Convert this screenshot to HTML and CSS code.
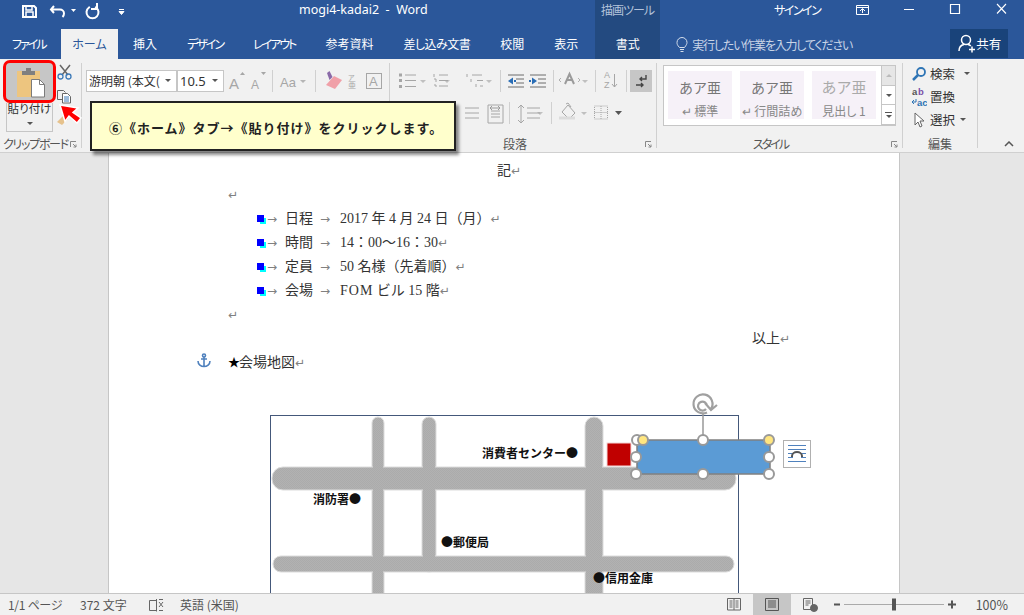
FILE: index.html
```html
<!DOCTYPE html>
<html lang="ja">
<head>
  <meta charset="UTF-8" />
  <title>mogi4-kadai2 - Word</title>
  <link rel="stylesheet" href="styles.css">
</head>
<body>
<div class="app">
  <div class="titlebar">
    <svg class="qat" width="299" height="29" viewBox="0 0 299 29" fill="none" stroke="#fff" stroke-width="2">
      <path d="M23 6h11l2 2v9H23z"/><path d="M26 6v4h6V6M26 17v-5h7v5" stroke-width="1.5"/>
      <path d="M54 6l-3 3.500 3 3.500M52 9.500h8a4 4 0 0 1 4 4c0 1.500-.5 2.500-1.500 3.500"/>
      <path d="M71 9h5l-2.500 3z" fill="#fff" stroke="none"/>
      <path d="M89 7.500a6 6 0 1 0 7 0M97 4v5h-5" stroke-linecap="square"/>
      <path d="M119 9.500h5M119 11.500h5l-2.500 3z" fill="#fff" stroke-width="1"/>
    </svg>
    <div class="doc-title">mogi4-kadai2&nbsp; -&nbsp; Word</div>
    <div class="context-label">描画ツール</div>
    <div class="signin">サインイン</div>
    <svg class="winbtns" width="204" height="29" viewBox="820 0 204 29" fill="none" stroke="#fff">
      <path d="M856.500 5.500h12v9h-12zM856.500 7.500h12M862.500 13V9M860 11l2.500-2.500L865 11"/>
      <path d="M904 9.500h10"/>
      <path d="M950.500 4.500h9v9h-9z" stroke-width="1.200"/>
      <path d="M997 4l9 9.500M1006 4l-9 9.500" stroke-width="1.100"/>
    </svg>
  </div>

  <div class="tabs">
    <div class="tab tab-file kana">ファイル</div>
    <div class="tab tab-active">ホーム</div>
    <div class="tab">挿入</div>
    <div class="tab kana">デザイン</div>
    <div class="tab kana">レイアウト</div>
    <div class="tab">参考資料</div>
    <div class="tab tab-long">差し込み文書</div>
    <div class="tab">校閲</div>
    <div class="tab">表示</div>
    <div class="tab tab-context">書式</div>
    <div class="tellme">
      <svg width="12" height="15" viewBox="0 0 12 15" fill="none" stroke="#d5deeb"><path d="M3.500 10.500C1 8 1 6.500 1 5.500a5 5 0 0 1 10 0c0 1-.5 2.500-2.500 5zM4 12.500h4M4.500 14.500h3"/></svg>
      <span>実行したい作業を入力してください</span>
    </div>
    <div class="share">
      <svg width="18" height="19" viewBox="0 0 18 19" fill="none" stroke="#fff" stroke-width="1.500"><circle cx="8" cy="6" r="4.500"/><path d="M1 17c0-4 2.500-6 5-6.500M10 10.500c1 .2 2 .7 2.800 1.500M11 15.500h6M14 12.500v6"/></svg>
      <span>共有</span>
    </div>
  </div>

  <div class="ribbon">
    <div class="group group-clip">
      <div class="paste-top">
        <svg width="30" height="32" viewBox="17 68 30 32">
          <rect x="17" y="71" width="23" height="26" fill="#edc57f"/>
          <path d="M22 71h13v4H22zM26 68h5v4h-5z" fill="#7f7f7f"/>
          <path d="M31.500 79.500h8l5 5v12.500h-13z" fill="#fff" stroke="#7b7b7b"/>
          <path d="M39.500 79.500v5h5" fill="none" stroke="#7b7b7b"/>
        </svg>
      </div>
      <div class="paste-label">貼り付け<i class="caret"></i></div>
      <svg class="clip-tools" width="20" height="66" viewBox="55 62 20 66" fill="none">
        <path d="M60 65l8 10M70 65l-8 10" stroke="#666" stroke-width="1.500"/>
        <circle cx="60.500" cy="76.500" r="2.500" stroke="#3d7ab8" stroke-width="1.300"/><circle cx="68.500" cy="76.500" r="2.500" stroke="#3d7ab8" stroke-width="1.300"/>
        <path d="M57.500 90.500h6l2 2M57.500 90.500v9h5" stroke="#666"/>
        <path d="M62.500 93.500h5l3 3v6.500h-8z" fill="#fff" stroke="#666"/>
        <path d="M64 97h5M64 99h5M64 101h5" stroke="#3d7ab8"/>
        <path d="M57 122l7-7 4 4-6 6z" fill="#e6c28d"/>
      </svg>
      <svg class="red-arrow" width="28" height="24" viewBox="56 102 28 24">
        <path d="M60 105l18 3-5 4.500 8 5.500-4 5-8-7-4 5.500z" fill="#f00" stroke="#fff" stroke-width="1.500"/>
      </svg>
      <div class="group-label clip-label">クリップボード</div>
      <svg class="launcher" width="7" height="7" viewBox="0 0 7 7" fill="none" stroke="#888"><path d="M.5 6V.5H6M3 3l3 3M6 3.500V6H3.500"/></svg>
    </div>

    <div class="group group-font">
      <div class="font-row">
        <div class="combo combo-name"><span class="combo-text">游明朝 (本文(</span><i class="caret caret-in"></i></div>
        <div class="combo combo-size"><span class="combo-text">10.5</span><i class="caret caret-in"></i></div>
        <svg class="font-tools" width="165" height="24" viewBox="224 68 165 24" fill="none">
          <text x="229" y="89" class="glyph" font-size="15">A</text><path d="M240 75l2.500-3 2.500 3z" fill="#a6a6a6"/>
          <text x="251" y="89" class="glyph" font-size="12">A</text><path d="M261 72l2.500 3 2.500-3z" fill="#a6a6a6"/>
          <path d="M272.500 70v22" stroke="#d0d0d0"/>
          <text x="280" y="87" class="glyph" font-size="13">Aa</text><path d="M300 80h6l-3 3z" fill="#b5b5b5"/>
          <path d="M315.500 70v22" stroke="#d0d0d0"/>
          <path d="M326 85l8-9 8 4-7 9z" fill="#f0a0a8"/><path d="M327 73l2.500-2 3 6-3 3z" fill="#8a6aa8"/>
          <text x="348" y="80" class="glyph" font-size="7">ア</text><text x="348" y="88" class="glyph" font-size="8">亜</text>
          <rect x="366.500" y="73.500" width="15" height="15" stroke="#a6a6a6"/><text x="369" y="86" class="glyph" font-size="13">A</text>
        </svg>
      </div>
    </div>

    <div class="group group-para">
      <svg class="para-tools" width="264" height="56" viewBox="392 68 264 56" fill="none" stroke="#a6a6a6">
        <path d="M398 75h3M398 80.500h3M398 86.500h3" stroke-width="3"/>
        <path d="M404 75h11M404 80.500h11M404 86.500h11"/>
        <path d="M419 80h6l-3 3zM443 80h6l-3 3zM485 80h6l-3 3zM581 80h6l-3 3zM536 112h6l-3 3zM580 112h6l-3 3z" fill="#c0c0c0" stroke="none"/>
        <path d="M433 74v3M433 79h2v3M433 85h2v2M438 75h9M438 80.500h9M438 86h9"/>
        <path d="M466 74v3M470 79v3M475 84v3M471 75h10M476 80.500h6M479 86h3"/>
        <path d="M499.500 70v22M552.500 70v22M594.500 70v22M625.500 70v22M508.500 102v22M550.500 102v22" stroke="#d0d0d0"/>
        <path d="M507 75h16M515 79h8M515 83h8M507 87h16M529 75h16M537 79h8M537 83h8M529 87h16" stroke="#6d6d6d"/>
        <path d="M507 81l5-3.500v7zM513 80h2v2h-2z" fill="#2a6db5" stroke="none"/>
        <path d="M536 81l-5-3.500v7zM530 80h-2v2h2z" fill="#2a6db5" stroke="none"/>
        <path d="M564 84l4.500-10 4.500 10M565.500 80h6" stroke="#9b9b9b" stroke-width="2"/>
        <path d="M560 78l-2 2 2 2M577 78l2 2-2 2" stroke="#b0b0b0"/>
        <text x="603" y="78" class="glyph" font-size="9" stroke="none">A</text><text x="603" y="88" class="glyph" font-size="9" stroke="none">Z</text>
        <path d="M613.500 74v13M611 84l2.500 3 2.500-3"/>
        <path d="M464 108h14M464 113h14M464 118h14M487 105h15M487 123h15M487 105v18M502 105v18M490 111h9M490 114h9M490 117h9"/>
        <path d="M489 108h10M489 108l2-2M489 108l2 2M499 108l-2-2M499 108l-2 2" stroke="#999"/>
        <path d="M520 105v18M517 108l3-3 3 3M517 120l3 3 3-3M526 108h13M526 113h13M526 118h13"/>
        <path d="M567 105l7 8-6 6-7-7z M565 104l2-1 3 4"/>
        <path d="M558 118h16" stroke="#dcdcdc" stroke-width="3"/>
        <path d="M593.500 106h13v13h-13zM593.500 112.500h13M600 106v13" stroke-dasharray="1 1"/>
        <path d="M614 111h7l-3.500 4z" fill="#555" stroke="none"/>
      </svg>
      <svg class="para-mark" width="22" height="22" viewBox="0 0 22 22" fill="none" stroke="#444">
        <path d="M16 5v4h-6M12 7l-2 2 2 2" stroke-width="1.400"/><path d="M6 15h7M11 13l2 2-2 2" stroke-width="1.400"/>
      </svg>
      <div class="group-label para-label">段落</div>
      <svg class="launcher" width="7" height="7" viewBox="0 0 7 7" fill="none" stroke="#888"><path d="M.5 6V.5H6M3 3l3 3M6 3.500V6H3.500"/></svg>
    </div>

    <div class="group group-style">
      <div class="gallery">
        <div class="style-items">
          <div class="style-item"><div class="style-sample">あア亜</div><div class="style-name">↵ 標準</div></div>
          <div class="style-item"><div class="style-sample">あア亜</div><div class="style-name">↵ 行間詰め</div></div>
          <div class="style-item style-heading"><div class="style-sample">あア亜</div><div class="style-name">見出し 1</div></div>
        </div>
        <div class="gallery-btns">
          <div class="gbtn gbtn-up"><i class="tri-up"></i></div>
          <div class="gbtn"><i class="caret"></i></div>
          <div class="gbtn gbtn-more"><b></b><i class="caret"></i></div>
        </div>
      </div>
      <div class="group-label style-label">スタイル</div>
      <svg class="launcher" width="7" height="7" viewBox="0 0 7 7" fill="none" stroke="#888"><path d="M.5 6V.5H6M3 3l3 3M6 3.500V6H3.500"/></svg>
    </div>

    <div class="group group-edit">
      <div class="edit-row">
        <svg width="16" height="16" viewBox="0 0 16 16" fill="none"><circle cx="10" cy="6" r="4" stroke="#2f75b5" stroke-width="1.800"/><path d="M7 9l-5 5" stroke="#2f75b5" stroke-width="2.500"/></svg>
        <span>検索</span><i class="caret caret-find"></i>
      </div>
      <div class="edit-row">
        <svg class="abc-icon" width="16" height="22" viewBox="0 0 16 22"><text x="1" y="9" class="abc abc-a">a</text><text x="7" y="9" class="abc abc-b">b</text><text x="6" y="20" class="abc abc-c">ac</text><path d="M5 13v3H1M3 14l-2 2 2 2" fill="none" stroke="#2f75b5"/></svg>
        <span>置換</span>
      </div>
      <div class="edit-row">
        <svg width="16" height="16" viewBox="0 0 16 16" fill="#fff" stroke="#666"><path d="M4 1v12l3-3 2 5 2-1-2-5h4z"/></svg>
        <span>選択</span><i class="caret caret-select"></i>
      </div>
      <div class="group-label">編集</div>
    </div>

    <svg class="collapse" width="10" height="6" viewBox="0 0 10 6" fill="none" stroke="#555" stroke-width="1.500"><path d="M1 5l4-4 4 4"/></svg>
  </div>

  <div class="workspace">
    <div class="page">
      <svg class="anchor" width="14" height="15" viewBox="0 0 14 15" fill="none" stroke="#4f81bd" stroke-width="1.600">
        <circle cx="7" cy="2.500" r="1.500"/><path d="M7 4v10M4 6h6M1 8c0 3.500 3 5.500 6 5.500s6-2 6-5.500"/>
      </svg>
      <div class="line line-center">記<span class="ret">↵</span></div>
      <div class="line"><span class="ret">↵</span></div>
      <div class="line list-line"><i class="bullet"></i><span class="tabmark">→</span><span class="list-key">日程</span><span class="tabmark tab2">→</span><span>2017 年 4 月 24 日（月）</span><span class="ret">↵</span></div>
      <div class="line list-line"><i class="bullet"></i><span class="tabmark">→</span><span class="list-key">時間</span><span class="tabmark tab2">→</span><span>14：00～16：30</span><span class="ret">↵</span></div>
      <div class="line list-line"><i class="bullet"></i><span class="tabmark">→</span><span class="list-key">定員</span><span class="tabmark tab2">→</span><span>50 名様（先着順）</span><span class="ret">↵</span></div>
      <div class="line list-line"><i class="bullet"></i><span class="tabmark">→</span><span class="list-key">会場</span><span class="tabmark tab2">→</span><span><span class="wide">FOM</span> ビル 15 階</span><span class="ret">↵</span></div>
      <div class="line"><span class="ret">↵</span></div>
      <div class="line line-right">以上<span class="ret">↵</span></div>
      <div class="line"><span class="star">★</span>会場地図<span class="ret">↵</span></div>

      <div class="map">
        <svg class="map-art" width="540" height="176" viewBox="271 416 540 176">
          <defs>
            <pattern id="dither" width="2" height="2" patternUnits="userSpaceOnUse">
              <rect width="2" height="2" fill="#b2b2b2"/><rect width="1" height="1" fill="#ababab"/><rect x="1" y="1" width="1" height="1" fill="#ababab"/>
            </pattern>
          </defs>
          <g fill="url(#dither)" stroke="#dcdcdc">
            <rect x="372" y="417" width="12" height="190" rx="6"/>
            <rect x="422" y="417" width="14" height="155" rx="7"/>
            <rect x="585" y="417" width="18" height="190" rx="9"/>
            <rect x="272" y="467" width="464" height="23" rx="11"/>
            <rect x="273" y="556" width="461" height="16" rx="8"/>
          </g>
          <g fill="url(#dither)">
            <rect x="373" y="460" width="10" height="130"/><rect x="423" y="460" width="12" height="108"/><rect x="586" y="460" width="16" height="130"/>
          </g>
          <rect x="607" y="443" width="24" height="23" fill="#c00000" stroke="#f4d6d6"/>
          <path d="M703 414v24" stroke="#999" stroke-width="1.500"/>
          <path d="M711 409a9.500 9.500 0 1 0-4 3.500M707 406a4.500 4.500 0 1 0-1 3M705 403l6 7 6-5" fill="none" stroke="#a0a0a0" stroke-width="2.200"/>
          <rect x="637" y="440" width="133" height="34" fill="#5b9bd5" stroke="#808080" stroke-width="1.500"/>
          <g fill="#fff" stroke="#999" stroke-width="2">
            <circle cx="637" cy="440" r="5"/>
            <circle cx="703" cy="440" r="5"/><circle cx="636" cy="457" r="5"/><circle cx="769" cy="457" r="5"/>
            <circle cx="636" cy="474" r="5"/><circle cx="703" cy="474" r="5"/><circle cx="769" cy="474" r="5"/>
          </g>
          <g fill="#ffe680" stroke="#999" stroke-width="2">
            <circle cx="643" cy="440" r="5"/><circle cx="769" cy="440" r="5"/>
          </g>
          <rect x="783.500" y="440.500" width="27" height="27" fill="#fff" stroke="#b0b0b0"/>
          <path d="M788 445.500h18M788 449.500h18M788 453.500h5M801 453.500h5M788 457.500h5M801 457.500h5M788 461.500h18" stroke="#4f81bd"/>
          <path d="M792 457v-1a5 4 0 0 1 10 0v1" fill="none" stroke="#555" stroke-width="2"/>
        </svg>
        <div class="map-label label-center">消費者センター●</div>
        <div class="map-label label-fire">消防署●</div>
        <div class="map-label label-post">●郵便局</div>
        <div class="map-label label-bank">●信用金庫</div>
      </div>
    </div>
  </div>

  <div class="statusbar">
    <span class="st-page">1/1 ページ</span>
    <span class="st-count">372 文字</span>
    <svg class="st-proof" width="16" height="14" viewBox="0 0 16 14" fill="none" stroke="#666"><path d="M8.500 2.500h-7v10h7M8.500 1v12.500M11 4l4 5M15 4l-4 5M11 1.500h4M11 12.500h4"/></svg>
    <span class="st-lang">英語 (米国)</span>
    <div class="st-right">
      <svg class="st-read" width="14" height="13" viewBox="0 0 14 13" fill="none" stroke="#666"><path d="M.5.500h13v11.500H.5zM7 .5v11.500M2.500 3h3M2.500 5h3M2.500 7h3M2.500 9h3M8.500 3h3M8.500 5h3M8.500 7h3M8.500 9h3"/></svg>
      <div class="st-layout"><svg width="14" height="13" viewBox="0 0 14 13" fill="none" stroke="#555"><path d="M.5.500h13v12H.5zM3 3h8M3 5h8M3 7h8M3 9h8"/></svg></div>
      <svg class="st-web" width="15" height="14" viewBox="0 0 15 14" fill="none" stroke="#666"><path d="M.5.500h9v11H.5zM2.500 3h5M2.500 5h5M2.500 7h3"/><circle cx="11" cy="10" r="3.500" fill="#666"/></svg>
      <svg class="st-zoom" width="122" height="13" viewBox="834 0 122 13" fill="none"><path d="M834 6.500h6M948 6.500h8M952 2.500v8" stroke="#555" stroke-width="2"/><path d="M844 6.500h100" stroke="#aaa"/><path d="M892 .5h4v12h-4z" fill="#555"/></svg>
      <span class="st-pct">100%</span>
    </div>
  </div>

  <div class="callout">⑥《ホーム》タブ→《貼り付け》をクリックします。</div>
</div>
</body>
</html>
```

FILE: styles.css
```css
* {
  box-sizing: border-box;
}
body {
  margin: 0;
  font-family: "Noto Sans CJK JP", "Noto Sans", sans-serif;
  font-size: 12px;
  font-feature-settings: "palt";
  color: #444;
}
svg {
  display: block;
  flex: none;
}
.app {
  position: relative;
  width: 1024px;
  height: 615px;
  overflow: hidden;
  display: flex;
  flex-direction: column;
  background: #2b579a;
}

/* title bar */
.titlebar {
  height: 29px;
  display: flex;
  align-items: center;
  color: #fff;
}
.doc-title {
  width: 296px;
  font-family: "Noto Sans", sans-serif;
  font-size: 12.5px;
  margin-top: -10px;
}
.context-label {
  width: 65px;
  height: 29px;
  line-height: 20px;
  text-align: center;
  letter-spacing: -1px;
  background: #234a80;
  color: #b4c3da;
}
.signin {
  margin-left: 114px;
  width: 46px;
  margin-top: -10px;
  white-space: nowrap;
  letter-spacing: -1.500px;
}

/* tabs */
.tabs {
  height: 30px;
  display: flex;
  align-items: stretch;
  color: #fff;
}
.tab {
  flex: none;
  padding: 0 15px;
  line-height: 29px;
  white-space: nowrap;
}
.kana {
  letter-spacing: -2px;
}
.tab-long {
  letter-spacing: -.5px;
}
.tab-file {
  width: 61px;
  padding: 0 0 0 12px;
}
.tab-active {
  width: 57px;
  padding: 0;
  text-align: center;
  background: #f1f1f1;
  color: #2b579a;
}
.tab-context {
  background: #234a80;
  margin-left: 2px;
  width: 65px;
  padding: 0;
  text-align: center;
}
.tellme {
  display: flex;
  flex: none;
  align-items: center;
  gap: 4px;
  margin-left: 16px;
  width: 274px;
  letter-spacing: -1.200px;
  white-space: nowrap;
  color: #c8d4e6;
}
.share {
  display: flex;
  flex: none;
  align-items: center;
  width: 58px;
  height: 29px;
  padding-left: 8px;
  background: #19437a;
  font-size: 12.5px;
  white-space: nowrap;
}

/* ribbon */
.ribbon {
  position: relative;
  height: 94px;
  display: flex;
  background: #f1f1f1;
  border-bottom: 1px solid #d0d0d0;
}
.group {
  position: relative;
  flex: none;
  height: 93px;
}
.group::after {
  content: "";
  position: absolute;
  right: 0;
  top: 4px;
  bottom: 4px;
  width: 1px;
  background: #d0d0d0;
}
.group-label {
  position: absolute;
  bottom: 0;
  left: 0;
  right: 1px;
  height: 17px;
  line-height: 17px;
  text-align: center;
  color: #555;
  white-space: nowrap;
}
.launcher {
  position: absolute;
  right: 5px;
  bottom: 4px;
}
.caret {
  display: block;
  width: 0;
  height: 0;
  border: 3px solid transparent;
  border-top: 3.500px solid #555;
  border-bottom: 0;
}

.group-clip {
  width: 82px;
}
.paste-top {
  position: relative;
  z-index: 2;
  margin: 1px 0 0 3px;
  width: 53px;
  height: 43px;
  padding: 5px 0 0 11px;
  background: #c6c6c6;
  border: 3px solid #f00;
  border-radius: 7px;
}
.paste-label {
  width: 47px;
  height: 29px;
  margin-left: 6px;
  border: 1px solid #c6c6c6;
  border-top: 0;
  text-align: center;
  line-height: 10px;
  white-space: nowrap;
  font-size: 11.5px;
  color: #333;
}
.paste-label .caret {
  margin: 9px auto 0;
}
.clip-tools {
  position: absolute;
  left: 55px;
  top: 3px;
}
.red-arrow {
  position: absolute;
  left: 56px;
  top: 43px;
  z-index: 3;
}
.clip-label {
  text-align: left;
  padding-left: 3px;
  letter-spacing: -1.300px;
}

.group-font {
  width: 308px;
}
.font-row {
  display: flex;
  align-items: flex-start;
  padding: 11px 0 0 4px;
}
.combo {
  position: relative;
  height: 22px;
  background: #fff;
  border: 1px solid #c6c6c6;
  line-height: 20px;
  white-space: nowrap;
  color: #333;
}
.combo-name {
  width: 91px;
}
.combo-size {
  width: 47px;
  font-size: 13px;
  font-family: "Noto Sans", sans-serif;
}
.combo-text {
  display: block;
  padding-left: 2px;
}
.caret-in {
  position: absolute;
  right: 5px;
  top: 8px;
}
.font-tools {
  margin-top: -2px;
}
.glyph {
  font-family: "Liberation Sans", "Noto Sans CJK JP", sans-serif;
  fill: #a6a6a6;
}

.group-para {
  width: 267px;
}
.para-tools {
  position: absolute;
  left: 3px;
  top: 9px;
}
.para-mark {
  position: absolute;
  left: 240px;
  top: 11px;
  background: #c6c6c6;
}
.para-label {
  padding-right: 16px;
}

.group-style {
  width: 246px;
}
.style-label {
  padding-right: 18px;
  letter-spacing: -2px;
}
.gallery {
  display: flex;
  margin: 6px 0 0 6px;
  width: 233px;
  height: 61px;
  background: #fff;
  border: 1px solid #c6c6c6;
  border-right: 0;
}
.style-items {
  display: flex;
  gap: 8px;
  width: 218px;
  padding: 5px 0 0 4px;
  border-right: 1px solid #c6c6c6;
}
.style-item {
  width: 64px;
  height: 48px;
  background: #f6f1f8;
  text-align: center;
  color: #777;
}
.style-sample {
  font-size: 14px;
  line-height: 32px;
  white-space: nowrap;
  font-feature-settings: normal;
}
.style-name {
  font-size: 12px;
  line-height: 16px;
  white-space: nowrap;
  color: #888;
}
.style-heading .style-sample {
  font-size: 15px;
  color: #aaa;
}
.gallery-btns {
  width: 14px;
  display: flex;
  flex-direction: column;
}
.gbtn {
  flex: 1;
  display: flex;
  flex-direction: column;
  gap: 2px;
  align-items: center;
  justify-content: center;
  border: 1px solid #c6c6c6;
  border-width: 0 1px 1px 0;
}
.gbtn-up {
  background: #e6e6e6;
}
.gbtn-more b {
  width: 7px;
  height: 1px;
  background: #555;
}
.tri-up {
  width: 0;
  height: 0;
  border: 3px solid transparent;
  border-bottom: 3.500px solid #bbb;
  border-top: 0;
}

.group-edit {
  width: 75px;
  padding: 3px 0 0 8px;
}
.edit-row {
  display: flex;
  align-items: center;
  gap: 3px;
  height: 23px;
  font-size: 12.5px;
  color: #333;
}
.caret-find {
  margin-left: 6px;
}
.caret-select {
  margin-left: 2px;
}
.abc {
  font-family: "Liberation Sans", sans-serif;
  font-size: 9.500px;
  font-weight: 700;
}
.abc-a {
  fill: #555;
}
.abc-b {
  fill: #7b4fa8;
}
.abc-c {
  fill: #2f75b5;
}
.collapse {
  position: absolute;
  right: 10px;
  bottom: 5px;
}

/* document */
.workspace {
  flex: 1;
  min-height: 0;
  overflow: hidden;
  padding-left: 108px;
  background: #e6e6e6;
}
.page {
  position: relative;
  width: 792px;
  height: 700px;
  padding: 6px 109px 0 119px;
  background: #fff;
  border: 1px solid #c6c6c6;
  border-top: 0;
  font-family: "Liberation Serif", "Noto Sans CJK JP", serif;
  font-size: 14px;
  font-feature-settings: normal;
  color: #333;
}
.line {
  height: 24px;
  line-height: 24px;
  white-space: nowrap;
}
.line-center {
  text-align: center;
}
.line-right {
  text-align: right;
}
.ret {
  font-family: "DejaVu Sans", sans-serif;
  font-size: 12px;
  color: #808080;
}
.star {
  font-size: 12px;
  letter-spacing: -1px;
  color: #000;
}
.wide {
  letter-spacing: 1px;
}
.list-line {
  display: flex;
  align-items: center;
  padding-left: 29px;
}
.bullet {
  flex: none;
  width: 9px;
  height: 9px;
  margin-right: 1px;
  background: linear-gradient(#00f, #00f) 0 0 / 7px 7px no-repeat,
              linear-gradient(#0ff, #0ff) 3px 3px / 6px 6px no-repeat;
}
.tabmark {
  flex: none;
  width: 18px;
  font-family: "DejaVu Sans", sans-serif;
  font-size: 12px;
  color: #808080;
}
.tab2 {
  width: 20px;
  margin-left: 7px;
}
.list-key {
  flex: none;
  width: 28px;
}
.anchor {
  position: absolute;
  left: 88px;
  top: 200px;
}

.map {
  position: relative;
  width: 469px;
  height: 260px;
  margin: 40px 0 0 42px;
  border: 1px solid #44587a;
}
.map-art {
  position: absolute;
  left: 0;
  top: 0;
  overflow: visible;
}
.map-label {
  position: absolute;
  font-family: "Noto Sans CJK JP", sans-serif;
  font-size: 12px;
  font-weight: 700;
  line-height: 16px;
  white-space: nowrap;
  color: #111;
}
.label-center {
  left: 211px;
  top: 29px;
}
.label-fire {
  left: 42px;
  top: 75px;
}
.label-post {
  left: 170px;
  top: 118px;
}
.label-bank {
  left: 322px;
  top: 154px;
}

/* status bar */
.statusbar {
  height: 22px;
  flex: none;
  display: flex;
  align-items: center;
  background: #f1f1f1;
  border-top: 1px solid #c6c6c6;
  color: #555;
  font-size: 12px;
  position: relative;
  z-index: 1;
}
.st-page {
  margin-left: 8px;
  width: 72px;
  letter-spacing: -.3px;
}
.st-count {
  width: 68px;
}
.st-proof {
  margin-right: 16px;
}
.st-right {
  margin-left: auto;
  display: flex;
  align-items: center;
  height: 21px;
}
.st-layout {
  width: 38px;
  height: 21px;
  margin: 0 12px;
  display: flex;
  align-items: center;
  justify-content: center;
  background: #c6c6c6;
}
.st-zoom {
  margin: 0 16px 0 16px;
}
.st-pct {
  width: 36px;
  margin-right: 16px;
  text-align: right;
  font-size: 12.5px;
}

/* tutorial note over the ribbon */
.callout {
  position: absolute;
  left: 90px;
  top: 101px;
  width: 366px;
  height: 50px;
  padding-left: 17px;
  line-height: 49px;
  background: #ffffcc;
  border: 2px solid #222;
  box-shadow: 3px 4px 3px rgba(0, 0, 0, .45);
  font-size: 13px;
  font-weight: 700;
  letter-spacing: 1px;
  font-feature-settings: normal;
  color: #222;
  white-space: nowrap;
}
```
